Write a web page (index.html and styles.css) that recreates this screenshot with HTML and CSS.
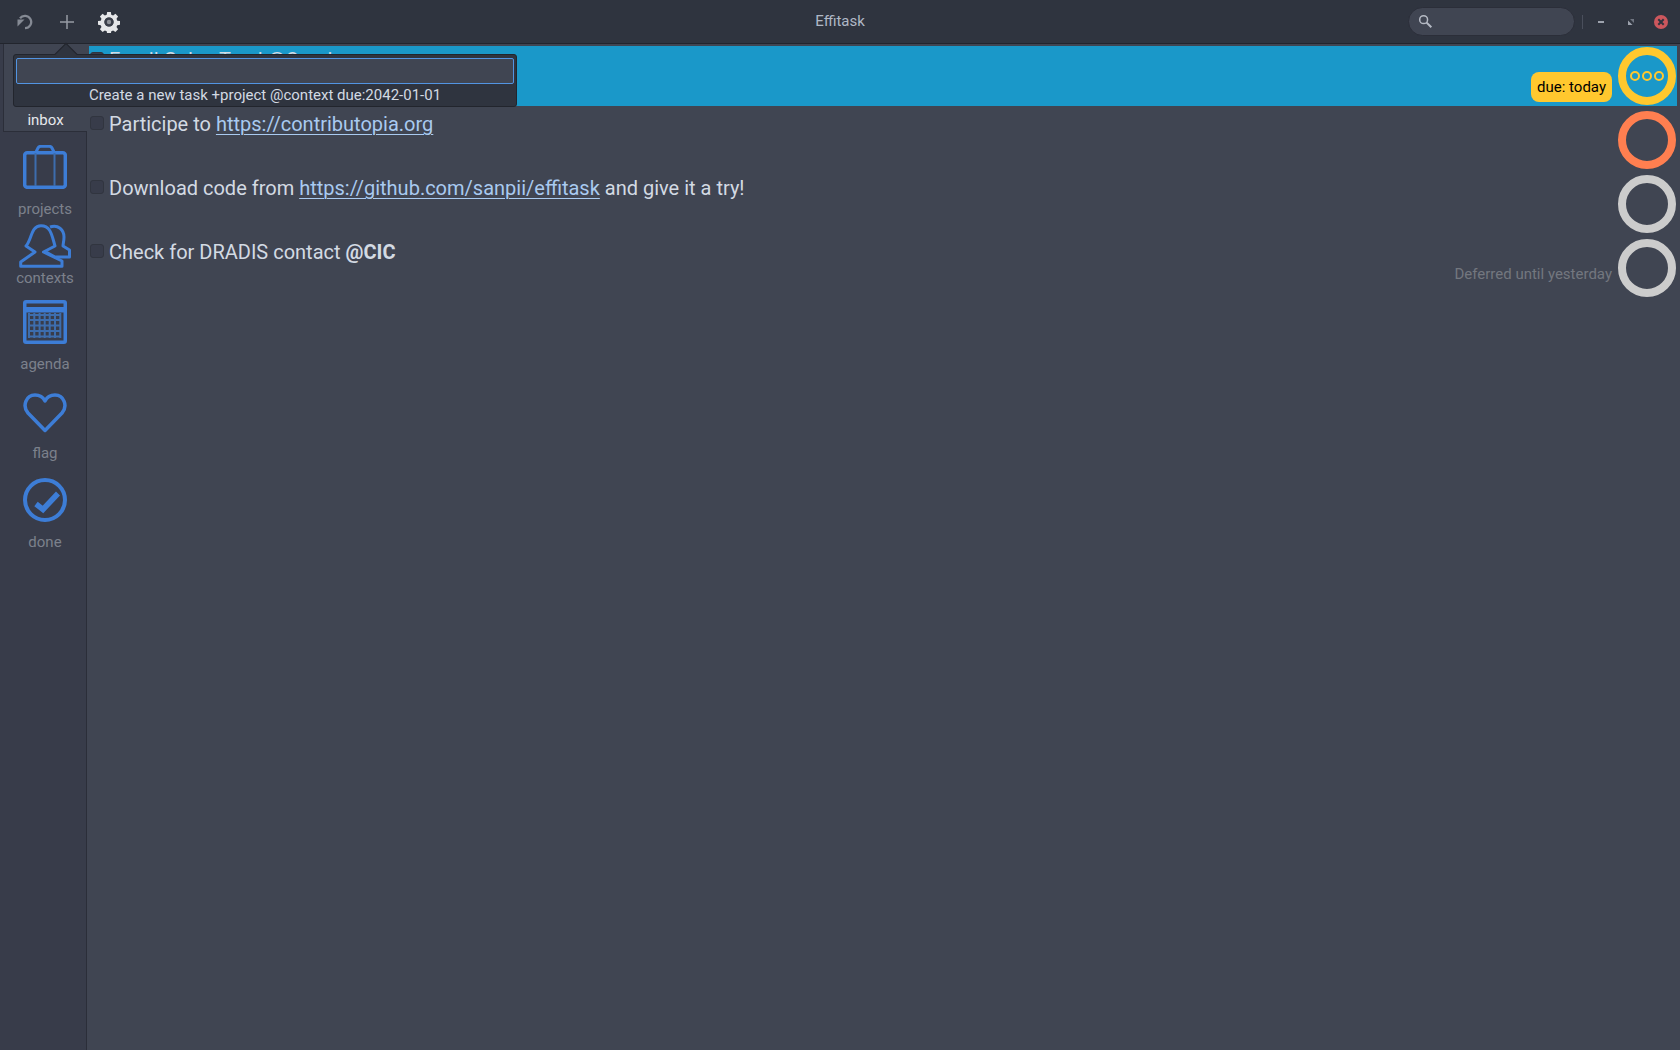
FILE: index.html
```html
<!DOCTYPE html>
<html lang="en">
<head>
<meta charset="utf-8">
<title>Effitask</title>
<link rel="stylesheet" href="styles.css">
</head>
<body>
<div class="app">
  <header class="titlebar">
    <div class="tb-left">
      <svg class="tb-refresh" viewBox="0 0 16 16"><path d="M8 14.200A6.200 6.200 0 1 0 3 4.300" fill="none" stroke="#858a94" stroke-width="2.300"/><path d="M.5 5.500h7l-7 7z" fill="#858a94"/></svg>
      <svg class="tb-plus" viewBox="0 0 14 14"><path d="M7 0v14M0 7h14" fill="none" stroke="#969aa4" stroke-width="1.500"/></svg>
      <svg class="tb-gear" viewBox="0 0 24 24"><path fill-rule="evenodd" fill="#e6e7e9" d="M10 1h4l.5 3 2 .8 2.500-1.700 2.900 2.900-1.700 2.500.8 2 3 .5v4l-3 .5-.8 2 1.700 2.500-2.900 2.900-2.500-1.700-2 .8-.5 3h-4l-.5-3-2-.8-2.500 1.700-2.900-2.900 1.700-2.500-.8-2-3-.5v-4l3-.5.8-2-1.700-2.500 2.900-2.900 2.500 1.700 2-.8zM12 7a5 5 0 1 0 0 10 5 5 0 0 0 0-10z"/><circle cx="12" cy="12" r="5" fill="#3a3e49"/><circle cx="12" cy="12" r="2.400" fill="#8e9198"/></svg>
    </div>
    <div class="tb-title">Effitask</div>
    <div class="tb-right">
      <div class="search">
        <svg class="search-icon" viewBox="0 0 16 16"><circle cx="6" cy="6" r="4.200" fill="none" stroke="#b5bac4" stroke-width="1.600"/><path d="M9.200 9.200l5 5" stroke="#b5bac4" stroke-width="2.200"/></svg>
      </div>
      <span class="tb-sep"></span>
      <span class="win-min"></span>
      <svg class="win-max" viewBox="0 0 6 6"><path d="M6 0v4L2 0z" fill="#6f7480"/><path d="M0 6V1.500L4.500 6z" fill="#9da2ad"/></svg>
      <span class="win-close"><svg viewBox="0 0 14 14"><path d="M4.300 4.300l5.400 5.400M9.700 4.300L4.300 9.700" stroke="#2f343f" stroke-width="2"/></svg></span>
    </div>
  </header>
  <div class="body">
    <nav class="sidebar">
      <a class="nav-item active"><span class="nav-label">inbox</span></a>
      <a class="nav-item projects">
        <svg class="nav-icon" viewBox="0 0 44 44"><path d="M13 7l2-4c.5-1 2-1.700 3-1.700h8c1 0 2.500.7 3 1.700l2 4" fill="none" stroke="#3d7dd6" stroke-width="3"/><rect x="1.700" y="7.700" width="40.600" height="34.600" rx="2.500" fill="none" stroke="#3d7dd6" stroke-width="3.500"/><path d="M12.500 8v33M31.500 8v33" stroke="#3d6dad" stroke-width="2"/></svg>
        <span class="nav-label">projects</span>
      </a>
      <a class="nav-item contexts">
        <svg class="nav-icon wide" viewBox="0 0 52 44"><path d="M7 22l9 6L1.700 38v4.300H43V37L24.500 28 36 22C33 12 32 1.700 22 1.700S13 15 7 22z" fill="none" stroke="#3d7dd6" stroke-width="3" stroke-linejoin="round"/><path d="M31 3c8-3 14 3 14 10 0 4-1 7-1 9l6.500 4v7H36l-9-5" fill="none" stroke="#3d7dd6" stroke-width="3" stroke-linejoin="round"/></svg>
        <span class="nav-label">contexts</span>
      </a>
      <a class="nav-item">
        <svg class="nav-icon" viewBox="0 0 44 44"><rect width="44" height="44" rx="3" fill="#3d7dd6"/><rect x="3.500" y="3.500" width="37" height="3.500" fill="#383c4a"/><rect x="3.500" y="12.500" width="37" height="28" fill="#383c4a"/><path d="M6 15h32M6 20h32M6 25.500h32M6 31h32M6 36.500h32M6 13v25M11.300 13v25M16.600 13v25M21.700 13v25M26.700 13v25M32 13v25M37.300 13v25" stroke="#3d6dad" stroke-width="2"/></svg>
        <span class="nav-label">agenda</span>
      </a>
      <a class="nav-item">
        <svg class="nav-icon" viewBox="0 0 44 44"><path d="M22 41.500L5 24C-1 17 3 6 12 6c4 0 8 2 10 6 2-4 6-6 10-6 9 0 13 11 7 18z" fill="none" stroke="#3d7dd6" stroke-width="3.500" stroke-linejoin="round"/></svg>
        <span class="nav-label">flag</span>
      </a>
      <a class="nav-item">
        <svg class="nav-icon" viewBox="0 0 44 44"><circle cx="22" cy="22" r="20" fill="none" stroke="#3d7dd6" stroke-width="4"/><path d="M13 26l7 5.500L35 15.500" fill="none" stroke="#3d7dd6" stroke-width="5.500"/></svg>
        <span class="nav-label">done</span>
      </a>
    </nav>
    <main class="tasks">
      <div class="task selected">
        <span class="check"></span>
        <div class="task-text">Email Galen Tyrol @Caprica</div>
        <div class="task-meta"><span class="tag">due: today</span></div>
        <span class="ring yellow"><i></i><i></i><i></i></span>
      </div>
      <div class="task">
        <span class="check"></span>
        <div class="task-text">Participe to <a class="link">https://contributopia.org</a></div>
        <span class="ring orange"></span>
      </div>
      <div class="task">
        <span class="check"></span>
        <div class="task-text">Download code from <a class="link">https://github.com/sanpii/effitask</a> and give it a try!</div>
        <span class="ring grey"></span>
      </div>
      <div class="task">
        <span class="check"></span>
        <div class="task-text">Check for DRADIS contact <b>@CIC</b></div>
        <div class="task-meta defer-wrap"><span class="defer">Deferred until yesterday</span></div>
        <span class="ring grey"></span>
      </div>
    </main>
  </div>
  <div class="popover">
    <span class="pop-arrow"></span>
    <div class="pop-input"></div>
    <div class="pop-hint">Create a new task +project @context due:2042-01-01</div>
  </div>
</div>
</body>
</html>
```
FILE: styles.css
```css
* { box-sizing: border-box; }
html, body { margin: 0; height: 100%; }
body { font-family: Roboto, "Open Sans", sans-serif; background: #404552; color: #d3dae3; overflow: hidden; }
.app { position: relative; width: 1680px; height: 1050px; display: flex; flex-direction: column; }
.titlebar { position: relative; height: 44px; flex: none; display: flex; align-items: center; justify-content: space-between; background: #2f343f; border-bottom: 1px solid #22252d; }
.tb-left { display: flex; align-items: center; padding-left: 17px; }
.tb-refresh { width: 16px; height: 16px; }
.tb-plus { width: 14px; height: 14px; margin-left: 27px; }
.tb-gear { width: 22px; height: 22px; margin-left: 24px; }
.tb-title { position: absolute; left: 0; right: 0; top: 0; text-align: center; font-size: 15px; line-height: 42px; color: #afb8c6; }
.tb-right { display: flex; align-items: center; padding-right: 12px; position: relative; }
.search { width: 167px; height: 29px; border-radius: 15px; background: #404552; border: 1px solid #2b2e39; display: flex; align-items: center; padding-left: 9px; }
.search-icon { width: 15px; height: 15px; }
.tb-sep { width: 1px; height: 14px; background: #4a4f5c; margin-left: 7px; }
.win-min { width: 6px; height: 2px; background: #9da2ad; margin-left: 15px; }
.win-max { width: 6px; height: 6px; margin-left: 24px; }
.win-close { width: 14px; height: 14px; margin-left: 20px; border-radius: 50%; background: #cc575d; display: flex; }
.win-close svg { width: 14px; height: 14px; }
.body { flex: 1; display: flex; min-height: 0; }
.sidebar { width: 87px; flex: none; background: #383c4a; border-right: 1px solid #2b2e39; display: flex; flex-direction: column; position: relative; }
.nav-item { width: 100%; height: 89px; padding: 3px 0 0 4px; display: flex; flex-direction: column; align-items: center; color: #7c818c; font-size: 15px; }
.nav-item.active { position: relative; width: 84px; height: 88px; padding: 0 0 1px; margin: 0 0 10px 3px; background: #404552; color: #e6e8ec; border-left: 1px solid #2b2e39; border-bottom: 1px solid #2b2e39; justify-content: flex-end; }
.nav-item.projects { height: 79px; }
.nav-item.contexts { height: 76px; }
.nav-icon { width: 44px; height: 44px; flex: none; }
.nav-icon.wide { width: 52px; }
.nav-label { line-height: 20px; margin-top: 10px; }
.contexts .nav-label, .active .nav-label { margin-top: 0; }
.tasks { flex: 1; padding: 2px 3px 0 2px; display: flex; flex-direction: column; gap: 4px; }
.task { height: 60px; display: flex; align-items: flex-start; padding-right: 1px; font-size: 20px; }
.task.selected { background: #1a98c9; }
.check { width: 14px; height: 14px; margin: 6px 5px 0 1px; border-radius: 3px; flex: none; background: #383c4a; border: 1px solid #31353f; }
.task-text { flex: 1; line-height: 28px; color: #d3dae3; }
.link { color: #a9caf0; text-decoration: underline; text-underline-offset: 3px; text-decoration-thickness: 1px; }
.task-text b { font-weight: 700; }
.task-meta { align-self: flex-end; margin-right: 6px; margin-bottom: 4px; font-size: 15px; }
.defer-wrap { margin-bottom: 12px; }
.tag { display: block; background: #ffc82e; color: #000; border-radius: 8px; padding: 0 6px; line-height: 30px; }
.defer { display: block; color: #73777f; line-height: 24px; }
.ring { width: 58px; height: 58px; margin-top: 1px; border-radius: 50%; border: 8px solid #ccc; display: flex; align-items: center; justify-content: center; gap: 2px; flex: none; }
.ring.yellow { border-color: #ffc82e; }
.ring.orange { border-color: #ff7f50; }
.ring i { width: 10px; height: 10px; border-radius: 50%; border: 2px solid #ffc82e; }
.popover { position: absolute; left: 13px; top: 54px; width: 504px; height: 53px; background: #2f343f; border: 1px solid #22252d; border-radius: 3px; padding: 3px 2px; }
.pop-arrow { position: absolute; left: 44px; top: -9px; width: 16px; height: 16px; transform: rotate(45deg); background: #2f343f; border-left: 1px solid #22252d; border-top: 1px solid #22252d; }
.pop-input { position: relative; height: 26px; background: #404552; border: 1px solid #5294e2; border-radius: 2px; }
.pop-hint { text-align: center; font-size: 15px; line-height: 20px; color: #d3dae3; margin-top: 1px; }
```
